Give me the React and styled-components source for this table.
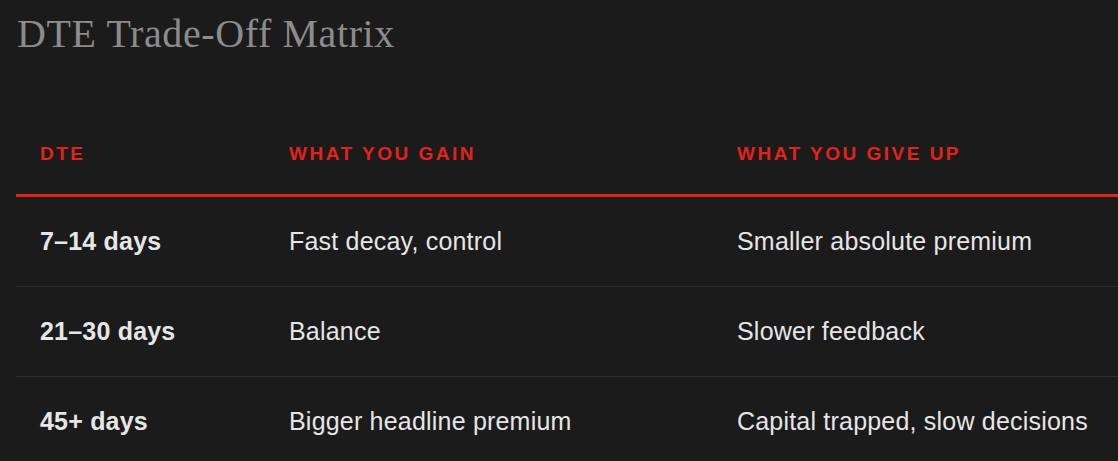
import React from "react";
import styled, { createGlobalStyle } from "styled-components";

const Global = createGlobalStyle`
  html, body {
    margin: 0;
    padding: 0;
    background: #1b1b1b;
    overflow: hidden;
  }
  * { box-sizing: border-box; }
`;

const Page = styled.div`
  padding: 14px 0 0 16px;
  background: #1b1b1b;
  min-height: 461px;
`;

const Title = styled.h2`
  margin: 0 0 59px 0;
  font-family: "Liberation Serif", "Times New Roman", serif;
  font-weight: 400;
  font-size: 40px;
  line-height: 40px;
  letter-spacing: 0.6px;
  color: #8c8c8c;
  padding-left: 1px;
`;

const Table = styled.div`
  display: grid;
  grid-template-columns: 249px 448px 1fr;
  width: 100%;
`;

const HeadCell = styled.div`
  padding: 30px 24px 29px;
  font-family: "Liberation Sans", Arial, sans-serif;
  font-weight: 700;
  font-size: 19px;
  line-height: 22px;
  letter-spacing: 2.5px;
  text-transform: uppercase;
  color: #e2231a;
  border-bottom: 3px solid #e2231a;
  white-space: nowrap;
`;

const Cell = styled.div`
  padding: 30px 24px;
  font-family: "Liberation Sans", Arial, sans-serif;
  font-weight: ${(p) => (p.$strong ? 700 : 400)};
  font-size: 25px;
  line-height: 29px;
  letter-spacing: 0.2px;
  color: #e6e6e6;
  white-space: nowrap;
  border-bottom: 1px solid ${(p) => (p.$last ? "transparent" : "#2e2e2e")};
`;

const rows = [
  ["7–14 days", "Fast decay, control", "Smaller absolute premium"],
  ["21–30 days", "Balance", "Slower feedback"],
  ["45+ days", "Bigger headline premium", "Capital trapped, slow decisions"],
];

export default function App() {
  return (
    <>
      <Global />
      <Page>
        <Title>DTE Trade-Off Matrix</Title>
        <Table>
          <HeadCell>DTE</HeadCell>
          <HeadCell>What you gain</HeadCell>
          <HeadCell>What you give up</HeadCell>
          {rows.map((r, i) =>
            r.map((c, j) => (
              <Cell key={`${i}-${j}`} $strong={j === 0} $last={i === rows.length - 1}>
                {c}
              </Cell>
            ))
          )}
        </Table>
      </Page>
    </>
  );
}
